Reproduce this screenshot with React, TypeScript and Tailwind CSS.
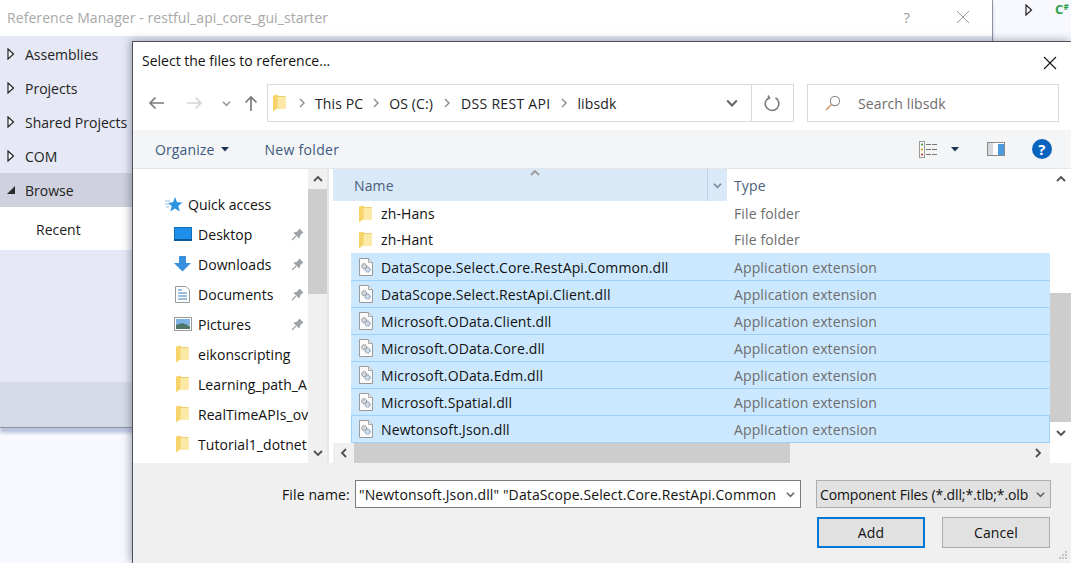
const F = '[font-family:"Open_Sans",sans-serif]';
function Folder({ className = "" }: { className?: string }) {
  return (
    <svg width="13" height="18" viewBox="0 0 13 18" className={className}>
      <path d="M0 1.5 L4.5 .5 L5.5 2.5 H12.5 V14.5 H4 L0 17.5 Z" fill="#f6d469" />
      <path d="M4.5 3 H12.5 V14.5 H4.5 Z" fill="#fce9a6" />
      <path d="M4.5 2.5 H12.5" stroke="#e9c65c" strokeWidth=".8" />
    </svg>
  );
}
function DllIcon() {
  return (
    <svg width="14" height="18" viewBox="0 0 14 18" className="shrink-0">
      <path d="M.5.5H9.5L13.5 4.5V17.5H.5Z" fill="#fbfbfb" stroke="#9a9a9a" />
      <path d="M9.5 .5V4.5H13.5" fill="#e8e8e8" stroke="#aaa" />
      <circle cx="5.2" cy="8.2" r="2.5" fill="#d3d6da" stroke="#7d7d7d" strokeWidth="1" strokeDasharray="1.4 .6" />
      <circle cx="8.6" cy="11.6" r="2.5" fill="#cfdcea" stroke="#71859c" strokeWidth="1" strokeDasharray="1.4 .6" />
    </svg>
  );
}
function Tri() {
  return (
    <svg width="8" height="12" viewBox="0 0 8 12" className="shrink-0">
      <path d="M1 1 L6.5 6 L1 11 Z" fill="#fff" stroke="#222" strokeWidth="1.2" />
    </svg>
  );
}
function Chev({ d = "down", c = "#555", s = 10 }: { d?: "down" | "up" | "left" | "right"; c?: string; s?: number }) {
  const p = { down: "M1 3 L5 7 L9 3", up: "M1 7 L5 3 L9 7", left: "M7 1 L3 5 L7 9", right: "M3 1 L7 5 L3 9" }[d];
  return (
    <svg width={s} height={s} viewBox="0 0 10 10" className="shrink-0">
      <path d={p} fill="none" stroke={c} strokeWidth="1.8" />
    </svg>
  );
}
function Sep() {
  return (
    <svg width="6" height="10" viewBox="0 0 6 10" className="shrink-0">
      <path d="M1 1 L5 5 L1 9" fill="none" stroke="#8a8a8a" strokeWidth="1.4" />
    </svg>
  );
}
function SideRow({ label }: { label: string }) {
  return (
    <div className="h-[34px] flex items-center pl-[7px] gap-[10px] text-[14px] text-[#222] tracking-normal">
      <Tri />
      <span>{label}</span>
    </div>
  );
}
function Pin() {
  return (
    <svg width="13" height="13" viewBox="0 0 13 13" className="shrink-0">
      <path d="M1 12 L5 8 M3.5 5 L8 9.5 L9 6.5 L11.5 4.5 L8.5 1.5 L6.5 4 Z" fill="#9ea3a8" stroke="#9ea3a8" strokeWidth="1.2" />
    </svg>
  );
}
function NavRow({ icon, label, pin }: { icon: React.ReactNode; label: string; pin?: boolean }) {
  return (
    <div className="h-[30px] flex items-center pl-[41px] pr-[4px] text-[14px] text-[#111] tracking-[0.06px]">
      <span className="w-[24px] flex justify-start shrink-0">{icon}</span>
      <span className="whitespace-nowrap flex-1">{label}</span>
      {pin && <Pin />}
    </div>
  );
}
function NavFolder() {
  return <span className="pl-[2px]"><Folder /></span>;
}
const files = [
  "DataScope.Select.Core.RestApi.Common.dll",
  "DataScope.Select.RestApi.Client.dll",
  "Microsoft.OData.Client.dll",
  "Microsoft.OData.Core.dll",
  "Microsoft.OData.Edm.dll",
  "Microsoft.Spatial.dll",
  "Newtonsoft.Json.dll",
];
export default function App() {
  return (
    <div className={`relative w-[1071px] h-[563px] overflow-hidden bg-[#f8f9fe] tracking-[0.12px] ${F}`}>
      {/* back window */}
      <div className="w-[993px] h-[428px] bg-white border-r border-[#8f929a] border-b flex flex-col shadow-[0_5px_3px_#bcc5df]">
        <div className="h-[36px] shrink-0 flex items-center justify-between pl-[7px] pr-[22px] pb-[2px] text-[14px] text-[#a8a8a8] tracking-[0.07px]">
          <span>Reference Manager - restful_api_core_gui_starter</span>
          <div className="flex items-center gap-[46px]">
            <span className="text-[15px] text-[#999]">?</span>
            <svg width="14" height="14" viewBox="0 0 14 14"><path d="M1 1 L13 13 M13 1 L1 13" stroke="#999" strokeWidth="1" /></svg>
          </div>
        </div>
        <div className="flex-1 flex flex-col bg-[#e6e9f5]">
          <div className="pt-[1px]">
            <SideRow label="Assemblies" />
            <SideRow label="Projects" />
            <SideRow label="Shared Projects" />
            <SideRow label="COM" />
            <div className="h-[34px] flex items-center pl-[7px] gap-[10px] bg-[#cfd1de] text-[14px] text-[#222] tracking-normal">
              <svg width="8" height="12" viewBox="0 0 8 12" className="shrink-0"><path d="M8 2 V10 H0 Z" fill="#2a2a2a" /></svg>
              <span>Browse</span>
            </div>
            <div className="h-[43px] flex items-center pl-[36px] pt-[1px] bg-white text-[14px] text-[#222] tracking-normal">Recent</div>
          </div>
          <div className="flex-1" />
          <div className="h-[45px] bg-[#d6dbe8]" />
        </div>
      </div>
      <div className="absolute left-[1025px] top-[3px] flex items-center gap-[22px]">
        <Tri />
        <span className="font-bold text-[#2e9e4a] leading-none flex items-start">
          <span className="text-[13px] leading-none">C</span>
          <span className="text-[8px] leading-none">#</span>
        </span>
      </div>

      {/* file dialog */}
      <div className="absolute left-[132px] top-[41px] w-[939px] h-[522px] bg-white border-l border-t border-[#4d5057] shadow-[-2px_-1px_8px_rgba(70,75,100,0.45)] flex flex-col">
        <div className="h-[42px] shrink-0 flex items-center justify-between pl-[9px] pr-[14px] pb-[5px] text-[14px] text-[#111] tracking-normal">
          <span>Select the files to reference...</span>
          <svg width="14" height="14" viewBox="0 0 14 14" className="mt-[4px]"><path d="M1 1 L13 13 M13 1 L1 13" stroke="#111" strokeWidth="1.1" /></svg>
        </div>
        {/* address row */}
        <div className="h-[38px] shrink-0 flex items-center pl-[15px] pr-[12px]">
          <svg width="17" height="14" viewBox="0 0 17 14" className="shrink-0"><path d="M16 7 H2 M7.5 1.5 L2 7 L7.5 12.5" fill="none" stroke="#7b7b7b" strokeWidth="1.7" /></svg>
          <svg width="17" height="14" viewBox="0 0 17 14" className="shrink-0 ml-[21px]"><path d="M1 7 H15 M9.5 1.5 L15 7 L9.5 12.5" fill="none" stroke="#d5d5d5" strokeWidth="1.7" /></svg>
          <span className="ml-[19px]"><Chev c="#9a9a9a" s={9} /></span>
          <svg width="14" height="17" viewBox="0 0 14 17" className="shrink-0 ml-[13px]"><path d="M7 16 V2 M1.5 7.5 L7 2 L12.5 7.5" fill="none" stroke="#7b7b7b" strokeWidth="1.7" /></svg>
          <div className="ml-[9px] h-[38px] w-[527px] border border-[#d9d9d9] flex items-center text-[14px] text-[#222]">
            <span className="ml-[5px]"><Folder /></span>
            <span className="ml-[13px]"><Sep /></span>
            <span className="ml-[10px]">This PC</span>
            <span className="ml-[10px]"><Sep /></span>
            <span className="ml-[10px]">OS (C:)</span>
            <span className="ml-[11px]"><Sep /></span>
            <span className="ml-[11px] tracking-[0.3px]">DSS REST API</span>
            <span className="ml-[11px]"><Sep /></span>
            <span className="ml-[10px]">libsdk</span>
            <div className="flex-1" />
            <span className="mr-[13px]"><Chev c="#666" s={12} /></span>
            <div className="w-[42px] h-full border-l border-[#d9d9d9] flex items-center justify-center">
              <svg width="17" height="17" viewBox="0 0 17 17"><path d="M11.5 2.8 A6.8 6.8 0 1 1 5 2.6 M4 0.5 L5.5 3 L3 4.6" fill="none" stroke="#7b7b7b" strokeWidth="1.6" /></svg>
            </div>
          </div>
          <div className="ml-[13px] h-[38px] w-[252px] border border-[#d9d9d9] flex items-center text-[14px] text-[#6d6d6d]">
            <svg width="16" height="16" viewBox="0 0 16 16" className="ml-[17px] shrink-0"><circle cx="10" cy="6" r="4.6" fill="none" stroke="#8c8c8c" strokeWidth="1.1" /><path d="M6.5 9.5 L1 15" stroke="#c78a5c" strokeWidth="1.2" /></svg>
            <span className="ml-[17px]">Search libsdk</span>
          </div>
        </div>
        {/* toolbar */}
        <div className="mt-[8px] h-[39px] shrink-0 bg-[#f4f5f7] border-b border-[#e4e5e7] flex items-center text-[14px] text-[#3d5a80]">
          <span className="ml-[22px]">Organize</span>
          <svg width="8" height="5" viewBox="0 0 8 5" className="ml-[6px]"><path d="M0 0 H8 L4 4.5 Z" fill="#1d3557" /></svg>
          <span className="ml-[36px] tracking-[0.3px]">New folder</span>
          <div className="flex-1" />
          <svg width="18" height="17" viewBox="0 0 18 17">
            <rect x=".5" y=".5" width="5" height="16" fill="#fff" stroke="#999" />
            <rect x="2" y="2.5" width="2" height="2" fill="#4a9a5a" /><rect x="2" y="7.5" width="2" height="2" fill="#d9a520" /><rect x="2" y="12.5" width="2" height="2" fill="#b5482f" />
            <path d="M7 3.5 H18 M7 8.5 H18 M7 13.5 H18" stroke="#777" strokeDasharray="5 1" />
          </svg>
          <svg width="8" height="5" viewBox="0 0 8 5" className="ml-[14px]"><path d="M0 0 H8 L4 4.5 Z" fill="#1d3557" /></svg>
          <svg width="18" height="14" viewBox="0 0 18 14" className="ml-[28px]">
            <rect x=".5" y=".5" width="17" height="13" fill="#fff" stroke="#8a8a8a" />
            <rect x="1" y="1" width="5" height="12" fill="#d5d8dc" /><rect x="11" y="2" width="6" height="11" fill="#4a9ae0" />
          </svg>
          <div className="ml-[27px] mr-[19px] w-[20px] h-[20px] rounded-full bg-[#0a63bd] flex items-center justify-center text-white font-bold text-[15px] leading-none">?</div>
        </div>
        {/* panes */}
        <div className="h-[294px] shrink-0 flex">
          <div className="w-[175px] shrink-0 bg-white pt-[20px]">
            <div className="h-[30px] flex items-center pl-[32px] text-[14px] text-[#111] tracking-normal">
              <svg width="18" height="17" viewBox="0 0 18 17" className="shrink-0"><path d="M10 1 L12 6.2 L17.5 6.5 L13.3 10 L14.7 15.5 L10 12.4 L5.3 15.5 L6.7 10 L3 7 L8 6.2 Z" fill="#2b94e0" /><path d="M0 5 H5 M0 8 H4 M1 11 H4" stroke="#8cc6f0" strokeWidth="1" /></svg>
              <span className="ml-[5px]">Quick access</span>
            </div>
            <NavRow label="Desktop" pin icon={<svg width="18" height="14" viewBox="0 0 18 14"><rect x=".5" y=".5" width="17" height="12" fill="#1e90ec" stroke="#0e6fb8" /><rect y="12" width="18" height="2" fill="#0b5b9c" /></svg>} />
            <NavRow label="Downloads" pin icon={<svg width="17" height="16" viewBox="0 0 17 16"><path d="M5 0 H12 V7 H17 L8.5 15.5 L0 7 H5 Z" fill="#3a8fdc" /></svg>} />
            <NavRow label="Documents" pin icon={<svg width="15" height="17" viewBox="0 0 15 17" className="ml-[1px]"><path d="M.5.5H11L14.5 4V16.5H.5Z" fill="#fff" stroke="#999" /><path d="M3 4H7M3 7H12M3 10H12M3 13H12" stroke="#3b7fc4" /></svg>} />
            <NavRow label="Pictures" pin icon={<svg width="18" height="14" viewBox="0 0 18 14"><rect x=".5" y=".5" width="17" height="13" fill="#fff" stroke="#9a9a9a" /><rect x="2" y="2" width="14" height="6" fill="#7fb2e5" /><path d="M2 8 L8 6 L16 9 V12 H2 Z" fill="#4f7668" /></svg>} />
            <NavRow label="eikonscripting" icon={<NavFolder />} />
            <NavRow label="Learning_path_A" icon={<NavFolder />} />
            <NavRow label="RealTimeAPIs_ov" icon={<NavFolder />} />
            <NavRow label="Tutorial1_dotnet" icon={<NavFolder />} />
          </div>
          <div className="w-[19px] shrink-0 bg-[#f0f0f0] flex flex-col items-center">
            <div className="h-[20px] flex items-center"><Chev d="up" c="#505050" /></div>
            <div className="h-[105px] w-full bg-[#cdcdcd]" />
            <div className="flex-1" />
            <div className="h-[20px] flex items-center"><Chev c="#505050" /></div>
          </div>
          <div className="w-[6px] shrink-0 bg-white border-l-2 border-[#e6e6e6]" />
          {/* list */}
          <div className="flex-1 min-w-0 flex flex-col">
            <div className="flex-1 min-h-0 flex">
              <div className="w-[717px] shrink-0 flex flex-col">
                <div className="h-[32px] shrink-0 flex text-[14px] text-[#4c607a]">
                  <div className="relative w-[374px] bg-[#d9e9f8] flex items-center pl-[21px]">
                    Name
                    <span className="absolute left-[197px] top-[-1px]"><Chev d="up" c="#9a9a9a" /></span>
                  </div>
                  <div className="w-[20px] bg-[#d9e9f8] border-l border-[#bcd0e4] flex items-center justify-center"><Chev c="#7a8a9c" s={9} /></div>
                  <div className="flex-1 flex items-center pl-[7px]">Type</div>
                </div>
                <div className="h-[25px] shrink-0 flex items-center text-[14px] text-[#111]">
                  <span className="ml-[26px] w-[22px]"><Folder /></span>
                  <span className="w-[353px]">zh-Hans</span>
                  <span className="text-[#6d6d6d]">File folder</span>
                </div>
                <div className="h-[27px] shrink-0 flex items-center text-[14px] text-[#111]">
                  <span className="ml-[26px] w-[22px]"><Folder /></span>
                  <span className="w-[353px]">zh-Hant</span>
                  <span className="text-[#6d6d6d]">File folder</span>
                </div>
                {files.map((n, i) => (
                  <div key={n} className={`ml-[18px] ${i === 0 ? "h-[28px] pt-[1px]" : "h-[27px]"} shrink-0 flex items-center bg-[#cce8ff] border-b border-[#99d1ff] text-[14px] text-[#111] ${i === 6 ? "border-x" : ""}`}>
                    <span className={`${i === 6 ? "ml-[7px]" : "ml-[8px]"} w-[22px]`}><DllIcon /></span>
                    <span className="w-[353px] whitespace-nowrap">{n}</span>
                    <span className="text-[#6d6d6d]">Application extension</span>
                  </div>
                ))}
              </div>
              <div className="flex-1 bg-white flex flex-col items-center">
                <div className="h-[20px] flex items-center"><Chev d="up" c="#505050" /></div>
                <div className="mt-[104px] h-[129px] w-full bg-[#cdcdcd]" />
                <div className="flex-1" />
                <div className="h-[20px] flex items-center"><Chev c="#505050" /></div>
              </div>
            </div>
            <div className="h-[20px] shrink-0 flex">
              <div className="w-[717px] bg-[#f0f0f0] flex items-center">
                <div className="w-[21px] flex justify-center"><Chev d="left" c="#505050" /></div>
                <div className="w-[436px] h-full bg-[#cdcdcd]" />
                <div className="flex-1" />
                <div className="w-[24px] flex justify-center"><Chev d="right" c="#505050" /></div>
              </div>
              <div className="flex-1 bg-white" />
            </div>
          </div>
        </div>
        {/* bottom */}
        <div className="flex-1 relative bg-[#f0f0f0] flex flex-col text-[14px] text-[#111]">
          <div className="mt-[17px] flex items-center">
            <span className="ml-[149px] w-[73px]">File name:</span>
            <div className="w-[446px] h-[28px] bg-white border border-[#7a7a7a] flex items-center pl-[3px]">
              <span className="whitespace-nowrap flex-1 tracking-[0.12px]">"Newtonsoft.Json.dll" "DataScope.Select.Core.RestApi.Common</span>
              <span className="mx-[5px]"><Chev c="#666" s={9} /></span>
            </div>
            <div className="ml-[15px] w-[235px] h-[28px] bg-[#e1e1e1] border border-[#adadad] flex items-center pl-[3px]">
              <span className="whitespace-nowrap flex-1 tracking-[-0.12px]">Component Files (*.dll;*.tlb;*.olb</span>
              <span className="mx-[5px]"><Chev c="#666" s={9} /></span>
            </div>
          </div>
          <div className="mt-[9px] flex">
            <div className="ml-[684px] w-[108px] h-[31px] bg-[#e1e1e1] border-2 border-[#0078d7] flex items-center justify-center">Add</div>
            <div className="ml-[17px] w-[108px] h-[31px] bg-[#e1e1e1] border border-[#adadad] flex items-center justify-center">Cancel</div>
          </div>
          <svg width="10" height="10" viewBox="0 0 10 10" className="absolute right-[3px] bottom-[3px]">
            <path d="M7 1h2v2H7zM4 4h2v2H4zM7 4h2v2H7zM1 7h2v2H1zM4 7h2v2H4zM7 7h2v2H7z" fill="#c4c4c4" />
          </svg>
        </div>
      </div>
    </div>
  );
}
